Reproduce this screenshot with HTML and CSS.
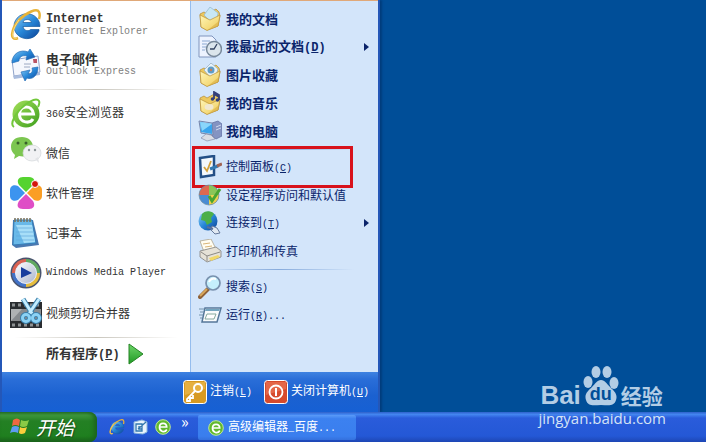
FILE: index.html
```
<!DOCTYPE html>
<html lang="zh-CN">
<head>
    <meta charset="UTF-8">
    <meta name="viewport" content="width=device-width, initial-scale=1.0">
    <title>开始菜单</title>
    <link rel="stylesheet" href="styles.css">
</head>
<body>

    <!-- Gradients and symbols shared by the icons -->
    <svg class="defs" aria-hidden="true">
        <defs>
            <linearGradient id="blue" x1="0" y1="0" x2="1" y2="1">
                <stop offset="0" stop-color="#8fd0f8"/><stop offset=".5" stop-color="#2787d8"/><stop offset="1" stop-color="#0b3f94"/>
            </linearGradient>
            <linearGradient id="green" x1="0" y1="0" x2="1" y2="1">
                <stop offset="0" stop-color="#a5e05a"/><stop offset="1" stop-color="#3c9e1c"/>
            </linearGradient>
            <linearGradient id="arrow" x1="0" y1="0" x2="0" y2="1">
                <stop offset="0" stop-color="#6fd56a"/><stop offset="1" stop-color="#1f9a24"/>
            </linearGradient>
            <linearGradient id="folder" x1="0" y1="0" x2="1" y2="1">
                <stop offset="0" stop-color="#fff6b8"/><stop offset="1" stop-color="#efcb58"/>
            </linearGradient>
            <linearGradient id="silver" x1="0" y1="0" x2="1" y2="1">
                <stop offset="0" stop-color="#ffffff"/><stop offset="1" stop-color="#a9b3cc"/>
            </linearGradient>
            <symbol id="ie" viewBox="0 0 32 32">
                <path d="M29 22A13 12.500 0 1 1 30 17.500H13C13.500 22 19 22.500 20.500 20.500H29ZM13 13.500H21.500C21 9.500 13.500 9.500 13 13.500Z" fill="url(#blue)" stroke="#175a9f" stroke-width=".7" fill-rule="evenodd"/>
                <path d="M8 29C-1 33 1 20 9 11C17 3 27-1 29 3C30 5 30 7 29 10" fill="none" stroke="#e8b338" stroke-width="2.500"/>
                <path d="M7 29C1 31 1 22 9 11" fill="none" stroke="#f8dc83" stroke-width="1"/>
            </symbol>
            <symbol id="e360" viewBox="0 0 32 32">
                <circle cx="16" cy="17" r="13.500" fill="url(#green)"/>
                <path d="M23 22C20 27 10 26 9.500 18C9 8 22 7 23.500 17H11" fill="none" stroke="#fff" stroke-width="3"/>
                <path d="M4 30C-1 27 6 15 15 8C21 3 27 1 29 4C30 6 29 8 28 10" fill="none" stroke="#72c83a" stroke-width="2"/>
            </symbol>
            <symbol id="ball" viewBox="0 0 16 16">
                <circle cx="8" cy="8" r="7.300" fill="#61b92d" stroke="#bfe89b"/>
                <path d="M11.800 10.500C10 14 4.500 13 4.500 8.300C4.500 3 11.500 3 11.700 8H5" fill="none" stroke="#fff" stroke-width="1.700"/>
            </symbol>
            <symbol id="open-folder" viewBox="0 0 24 24">
                <path d="M2 7L6 5L9 7L18 2L21 5L22 9L20 19L9 23L3 20Z" fill="#edc95e" stroke="#b58b35" stroke-width=".7"/>
            </symbol>
            <symbol id="folder-front" viewBox="0 0 24 24">
                <path d="M2 8L12 13L22 8L20 19L9 23.500L3 20Z" fill="url(#folder)" stroke="#b99039" stroke-width=".7"/>
                <path d="M9 23.500L20 19L21 14Z" fill="#d9ae42" opacity=".6"/>
            </symbol>
        </defs>
    </svg>

    <main class="desktop">
        <nav class="start-menu">
            <div class="columns">
                <div class="programs">
                    <a class="program" href="#">
                        <svg class="icon-lg"><use href="#ie"/></svg>
                        <span class="label"><b class="en">Internet</b><small class="en">Internet Explorer</small></span>
                    </a>
                    <a class="program" href="#">
                        <svg class="icon-lg" viewBox="0 0 32 32">
                            <path d="M2 11L28 7L30 23L4 27Z" fill="#f5f7fd" stroke="#8fa3ca"/>
                            <path d="M3 27L4 30L30 26V23" fill="#a9bcdd"/>
                            <path d="M23 10H27V14H23.500Z" fill="#b95465"/>
                            <path d="M14 15H21M14 18H20" stroke="#9ca8c2"/>
                            <path d="M2 14C2 4 11 0 18 3L20 0L25 8L16 11L17 7C12 6 9 8 9 12Z" fill="url(#blue)" stroke="#266fb8" stroke-width=".7"/>
                            <path d="M28 18C28 27 22 31 17 29L15 32L11 23L20 21L18 25C22 25 23 22 22 19Z" fill="url(#blue)" stroke="#266fb8" stroke-width=".7"/>
                        </svg>
                        <span class="label"><b>电子邮件</b><small class="en">Outlook Express</small></span>
                    </a>
                    <hr class="divider">
                    <a class="program" href="#">
                        <svg class="icon-lg"><use href="#e360"/></svg>
                        <span><span class="en">360</span>安全浏览器</span>
                    </a>
                    <a class="program" href="#">
                        <svg class="icon-lg" viewBox="0 0 32 32">
                            <path d="M12 0C5 0 1 4 1 10C1 14 3 16 5 18L4 22L9 19C18 21 23 16 23 10C23 4 18 0 12 0Z" fill="#7cc650"/>
                            <ellipse cx="22" cy="16" rx="9" ry="8" fill="#f1f2f4" stroke="#d3d7da" stroke-width=".7"/>
                            <path d="M25 22L29 26L28 20Z" fill="#e2e4e7"/>
                            <g fill="#37602a"><circle cx="8" cy="6" r="1.500"/><circle cx="16" cy="6" r="1.500"/></g>
                            <g fill="#8d9699"><circle cx="19" cy="13" r="1.200"/><circle cx="25" cy="13" r="1.200"/></g>
                        </svg>
                        <span>微信</span>
                    </a>
                    <a class="program" href="#">
                        <svg class="icon-lg" viewBox="0 0 32 32">
                            <path d="M16 15L9 8C6 3 9 0 13 0H19C24 0 26 4 23 8Z" fill="#55d32f"/>
                            <path d="M15 16L8 9C4 7 0 9 0 13V19C0 23 4 25 8 23Z" fill="#3c94ef"/>
                            <path d="M17 16L24 9C28 7 32 9 32 13V19C32 23 28 25 24 23Z" fill="#fb9e24"/>
                            <path d="M16 17L23 24C26 29 23 32 19 32H13C8 32 6 29 9 24Z" fill="#df4ec6"/>
                            <circle cx="25" cy="7" r="3.500" fill="#d3160d" stroke="#fff"/>
                        </svg>
                        <span>软件管理</span>
                    </a>
                    <a class="program" href="#">
                        <svg class="icon-lg" viewBox="0 0 32 32">
                            <path d="M3 3H23L29 28L6 31L2 28Z" fill="#4a78b0"/>
                            <path d="M4 3H22L26 26L3 28Z" fill="#69b9e9" stroke="#357eb8"/>
                            <path d="M6 8H22L25 25L14 26Z" fill="#a7def8"/>
                            <path d="M6 11H22M6 15H23M6 19H24M6 23H24" stroke="#62a9dc" stroke-width=".7"/>
                            <path d="M5 1V5M8 1V5M11 1V5M14 1V5M17 1V5M20 1V5" stroke="#77705b" stroke-width="1.500"/>
                        </svg>
                        <span>记事本</span>
                    </a>
                    <a class="program" href="#">
                        <svg class="icon-lg" viewBox="0 0 32 32">
                            <circle cx="16" cy="16" r="15.500" fill="#49536e"/>
                            <path d="M16 16V2A14 14 0 0 0 2 16Z" fill="#d96252"/>
                            <path d="M16 16V2A14 14 0 0 1 30 16Z" fill="#61a962"/>
                            <path d="M16 16H30A14 14 0 0 1 16 30Z" fill="#e6bd3d"/>
                            <path d="M16 16H2A14 14 0 0 0 16 30Z" fill="#4272c7"/>
                            <circle cx="16" cy="16" r="10.500" fill="url(#silver)" stroke="#e8edfa"/>
                            <path d="M11 10L22 16L11 21Z" fill="#183d9d"/>
                        </svg>
                        <span class="en">Windows Media Player</span>
                    </a>
                    <a class="program" href="#">
                        <svg class="icon-lg" viewBox="0 0 32 32">
                            <path d="M0 5H32V31H0Z" fill="#292c30"/>
                            <path d="M1 12H31V24H1Z" fill="#878b8f"/>
                            <path d="M1 24L12 12H1Z" fill="#afb2b4"/>
                            <path d="M2 8H31M2 28H31" stroke="#8d9193" stroke-width="3" stroke-dasharray="3 3"/>
                            <path d="M13 2L23 18M29 2L18 18" stroke="#397eaa" stroke-width="5"/>
                            <path d="M13 2L23 18M29 2L18 18" stroke="#c3edff" stroke-width="3"/>
                            <g fill="none" stroke="#397eaa" stroke-width="5"><circle cx="16" cy="21" r="3.500"/><circle cx="26" cy="21" r="3.500"/></g>
                            <g fill="none" stroke="#8bd2f5" stroke-width="3"><circle cx="16" cy="21" r="3.500"/><circle cx="26" cy="21" r="3.500"/></g>
                        </svg>
                        <span>视频剪切合并器</span>
                    </a>
                    <hr class="divider">
                    <a class="all-programs" href="#">
                        <span>所有程序<span class="en">(<u>P</u>)</span></span>
                        <svg class="all-arrow" viewBox="0 0 16 22"><path d="M1 1L15 11L1 21Z" fill="url(#arrow)" stroke="#258424" stroke-linejoin="round"/></svg>
                    </a>
                </div>

                <div class="places">
                    <a class="place strong" href="#">
                        <svg class="icon-md" viewBox="0 0 24 24"><use href="#open-folder"/><path d="M6 8L12 0L20 6L19 12L12 14Z" fill="#c8e7f5" stroke="#91b6cd" stroke-width=".7"/><use href="#folder-front"/></svg>
                        <span>我的文档</span>
                    </a>
                    <a class="place strong" href="#">
                        <svg class="icon-md" viewBox="0 0 24 24"><path d="M1 1H14L18 5V22H1Z" fill="#edf3ff" stroke="#8095bd"/><path d="M4 6H12M4 9H9M4 12H8M4 15H7" stroke="#8ba9d2"/><circle cx="16" cy="14" r="7.500" fill="#dbe5ec" stroke="#77889a" stroke-width="1.500"/><path d="M19 9L16 14H12" fill="none" stroke="#354461" stroke-width="1.300"/></svg>
                        <span>我最近的文档<span class="en">(<u>D</u>)</span></span>
                        <span class="submenu-arrow"></span>
                    </a>
                    <a class="place strong" href="#">
                        <svg class="icon-md" viewBox="0 0 24 24"><use href="#open-folder"/><path d="M6 7L13 0L20 6L18 12L12 14Z" fill="#e8f4fc" stroke="#91a9bd" stroke-width=".7"/><circle cx="13" cy="7" r="3.500" fill="#5e9dc9"/><circle cx="13" cy="7" r="1.200" fill="#c97d57"/><use href="#folder-front"/></svg>
                        <span>图片收藏</span>
                    </a>
                    <a class="place strong" href="#">
                        <svg class="icon-md" viewBox="0 0 24 24"><use href="#open-folder"/><use href="#folder-front"/><ellipse cx="11" cy="16" rx="4.500" ry="3" fill="#f1e8d0"/><path d="M16 8V1L21 4V9M16 3L21 6" fill="none" stroke="#333f79" stroke-width="1.800"/><circle cx="14.500" cy="8" r="1.800" fill="#333f79"/><circle cx="19.500" cy="9" r="1.800" fill="#333f79"/></svg>
                        <span>我的音乐</span>
                    </a>
                    <a class="place strong" href="#">
                        <svg class="icon-md" viewBox="0 0 24 24"><path d="M14 4L20 2L24 5V17L18 20L14 17Z" fill="#8494c2" stroke="#5d6b9d" stroke-width=".7"/><path d="M18 8L23 6M18 11L23 9" stroke="#d1daef"/><path d="M1 2L14 4L15 16L3 14Z" fill="#d2d9e7" stroke="#7284ac"/><path d="M2 3L14 5L14 15L3 13Z" fill="#39a5ed"/><path d="M2 3L14 5L4 12Z" fill="#89d6fb"/><path d="M8 15L13 16L17 20L9 22L3 19Z" fill="#dadde4" stroke="#858eaa" stroke-width=".7"/></svg>
                        <span>我的电脑</span>
                    </a>
                    <hr class="divider">
                    <a class="place highlighted" href="#">
                        <svg class="icon-md" viewBox="0 0 24 24"><path d="M2 3L16 1V20L3 22Z" fill="#f4f8fc" stroke="#244f86" stroke-width="2.500"/><path d="M6 12L9 16L13 6" fill="none" stroke="#d4a13b" stroke-width="1.800"/><path d="M12 14L20 11" stroke="#3279b1" stroke-width="3"/><path d="M19 11L24 9" stroke="#a16554" stroke-width="3"/></svg>
                        <span>控制面板<span class="en">(<u>C</u>)</span></span>
                    </a>
                    <a class="place" href="#">
                        <svg class="icon-md" viewBox="0 0 24 24"><circle cx="11" cy="12" r="10" fill="#4b8cd2"/><path d="M11 12V2A10 10 0 0 0 1 12Z" fill="#df6950"/><path d="M11 12V2A10 10 0 0 1 21 12Z" fill="#8ac559"/><path d="M11 12H21A10 10 0 0 1 11 22Z" fill="#efd04d"/><circle cx="11" cy="12" r="10" fill="none" stroke="#6f8c9f" stroke-width=".7"/><path d="M11 13L14 18L22 6" fill="none" stroke="#49a432" stroke-width="3"/></svg>
                        <span>设定程序访问和默认值</span>
                    </a>
                    <a class="place" href="#">
                        <svg class="icon-md" viewBox="0 0 24 24"><circle cx="10" cy="10" r="9.500" fill="url(#blue)"/><path d="M4 3C8-1 14 0 16 3L13 7L14 11L9 14L7 10L3 9Z" fill="#4caf49"/><path d="M14 15L19 17L22 22L17 23L13 19Z" fill="#e0e8f2" stroke="#65799b"/><path d="M9 16L15 18" stroke="#59709b" stroke-width="2"/></svg>
                        <span>连接到<span class="en">(<u>T</u>)</span></span>
                        <span class="submenu-arrow"></span>
                    </a>
                    <a class="place" href="#">
                        <svg class="icon-md" viewBox="0 0 24 24"><path d="M2 2L13 0L18 10L6 13Z" fill="#fffdf2" stroke="#a69b80" stroke-width=".7"/><path d="M5 5L12 4M7 8L14 7" stroke="#d9b578"/><path d="M2 12L18 8L23 12V18L9 23L2 18Z" fill="#e6e2d7" stroke="#807f7b" stroke-width=".8"/><path d="M3 13L9 17L22 13M9 17V22" fill="none" stroke="#8c8a85"/><path d="M11 19L20 16L22 18L13 22Z" fill="#f1d867"/></svg>
                        <span>打印机和传真</span>
                    </a>
                    <hr class="divider">
                    <a class="place" href="#">
                        <svg class="icon-md" viewBox="0 0 24 24"><path d="M2 22L10 14" stroke="#8d6038" stroke-width="4" stroke-linecap="round"/><path d="M2 21L9 14" stroke="#d9a75b" stroke-width="2"/><circle cx="15" cy="8" r="7" fill="#c5effc" stroke="#7890ad" stroke-width="1.700"/><path d="M11 7C12 4 15 3 18 4" fill="none" stroke="#fff" stroke-width="2"/></svg>
                        <span>搜索<span class="en">(<u>S</u>)</span></span>
                    </a>
                    <a class="place" href="#">
                        <svg class="icon-md" viewBox="0 0 24 24"><path d="M7 5H23L19 19H4Z" fill="#f8fbfc" stroke="#557799" stroke-width="1.500"/><path d="M8 6H22L21 8H7Z" fill="#73a5bf"/><path d="M9 11H18L16 16H7Z" fill="#fff" stroke="#86a99e"/><path d="M1 6H6M2 9H6M1 12H5M2 15H4" stroke="#7293ac"/></svg>
                        <span>运行<span class="en">(<u>R</u>)...</span></span>
                    </a>
                </div>
            </div>

            <div class="session">
                <button class="session-button" type="button">
                    <svg class="icon-md" viewBox="0 0 24 24"><rect x=".5" y=".5" width="23" height="23" rx="3" fill="#d79a22" stroke="#fff"/><path d="M2 2H22V9L2 15Z" fill="#ecb94e" opacity=".7"/><circle cx="15" cy="8" r="4" fill="none" stroke="#fff" stroke-width="2"/><path d="M12 11L4 19V21H7V18H10V15" fill="none" stroke="#fff" stroke-width="1.800"/></svg>
                    <span>注销<span class="en">(<u>L</u>)</span></span>
                </button>
                <button class="session-button" type="button">
                    <svg class="icon-md" viewBox="0 0 24 24"><rect x=".5" y=".5" width="23" height="23" rx="3" fill="#d64a2c" stroke="#fff"/><path d="M2 2H22V9L2 15Z" fill="#ed7c5c" opacity=".6"/><circle cx="12" cy="12" r="6.500" fill="none" stroke="#fff" stroke-width="1.800"/><path d="M12 8V16" stroke="#fff" stroke-width="2"/></svg>
                    <span>关闭计算机<span class="en">(<u>U</u>)</span></span>
                </button>
            </div>
        </nav>
    </main>

    <footer class="taskbar">
        <button class="start-button" type="button">
            <svg class="flag" viewBox="0 0 20 20">
                <path d="M3 3Q7 0 10 3L9 9Q5 7 2 9Z" fill="#ef6842"/>
                <path d="M11 3Q15 5 19 3L17 9Q13 11 10 9Z" fill="#8acb46"/>
                <path d="M2 10Q5 8 9 10L8 16Q4 14 0 16Z" fill="#5d9cf2"/>
                <path d="M10 10Q13 12 17 10L15 16Q11 18 9 16Z" fill="#f9ce3c"/>
            </svg>
            <span>开始</span>
        </button>
        <div class="quick-launch">
            <a href="#" aria-label="Internet Explorer"><svg class="icon-sm"><use href="#ie"/></svg></a>
            <a href="#" aria-label="显示桌面"><svg class="icon-sm" viewBox="0 0 16 16"><path d="M2 3L10 1L15 3V13L11 15L2 14Z" fill="#e9f4fc" stroke="#8cb7dc"/><path d="M4 5H10V12H4ZM6 10L14 3M7 7V10H10" fill="none" stroke="#3277ae" stroke-width="1.300"/></svg></a>
            <a href="#" aria-label="360安全浏览器"><svg class="icon-sm"><use href="#ball"/></svg></a>
            <button class="more" type="button">»</button>
        </div>
        <button class="task" type="button">
            <svg class="icon-sm"><use href="#ball"/></svg>
            <span>高级编辑器<span class="en">_</span>百度<span class="en">...</span></span>
        </button>
    </footer>

    <div class="watermark">
        <div class="brand">
            <span class="brand-name">Bai</span>
            <span class="paw">
                <svg viewBox="0 0 36 40"><g fill="currentColor"><ellipse cx="5" cy="16" rx="4.500" ry="6"/><ellipse cx="13" cy="6" rx="4.500" ry="6"/><ellipse cx="24" cy="6" rx="4.500" ry="6"/><ellipse cx="31" cy="17" rx="4.500" ry="6"/><path d="M18 14C22 14 24 18 27 21C31 25 35 28 33 34C31 41 25 39 18 39C11 39 5 41 3 34C1 28 5 25 9 21C12 18 14 14 18 14Z"/></g></svg>
                <span class="paw-text">du</span>
            </span>
            <span class="brand-cn">经验</span>
        </div>
        <div class="site">jingyan.baidu.com</div>
    </div>

</body>
</html>
```
FILE: styles.css
```
* {
    box-sizing: border-box;
}

body {
    margin: 0;
    min-height: 100vh;
    display: flex;
    flex-direction: column;
    position: relative;
    background-color: #004e98;
    font-family: "Noto Sans CJK SC", sans-serif;
    font-size: 12px;
    line-height: 16px;
}

a {
    color: inherit;
    text-decoration: none;
}

button {
    border: 0;
    padding: 0;
    background: none;
    color: inherit;
    font: inherit;
    cursor: pointer;
}

svg {
    display: block;
    flex: none;
}

.defs {
    position: absolute;
    width: 0;
    height: 0;
}

.en {
    font-family: "Liberation Mono", monospace;
    font-size: 10px;
}

.icon-lg {
    width: 32px;
    height: 32px;
}

.icon-md {
    width: 24px;
    height: 24px;
}

.icon-sm {
    width: 16px;
    height: 16px;
}

/* Start menu */
.desktop {
    flex: 1;
    display: flex;
    align-items: flex-end;
}

.start-menu {
    width: 380px;
    border: solid #2457b8;
    border-width: 0 2px;
    background-color: #2364cf;
    box-shadow: 2px 0 2px #003c7c;
}

.columns {
    display: grid;
    grid-template-columns: 1fr 1fr;
    border-top: 1px solid #e0a878;
}

.programs {
    padding: 4px 0 0;
    background-color: #fff;
    color: #333;
}

.program {
    display: flex;
    align-items: center;
    gap: 4px;
    height: 40px;
    padding-left: 8px;
}

.label {
    display: flex;
    flex-direction: column;
}

.label b {
    font-size: 13px;
    line-height: 14px;
}

.label b.en {
    font-size: 12px;
}

.label small {
    color: #808080;
    line-height: 12px;
}

.divider {
    height: 1px;
    margin: 4px 12px 3px;
    border: 0;
    background: linear-gradient(to right, transparent, #c9c6bd, transparent);
}

.all-programs {
    display: flex;
    align-items: center;
    gap: 8px;
    height: 26px;
    padding-left: 44px;
    font-size: 13px;
    font-weight: bold;
}

.all-arrow {
    width: 16px;
    height: 22px;
}

.places {
    padding: 4px 0 0;
    border-left: 1px solid #95bdee;
    background-color: #d3e5fa;
    color: #0a246a;
}

.place {
    display: flex;
    align-items: center;
    gap: 4px;
    height: 28px;
    padding: 0 9px 0 7px;
    position: relative;
}

.strong {
    font-size: 13px;
    font-weight: bold;
}

.strong .en,
.all-programs .en {
    font-size: 12px;
}

.places .divider {
    margin-right: 24px;
    background: linear-gradient(to right, transparent, #87abdc, transparent);
}

.submenu-arrow {
    margin-left: auto;
    border: solid transparent;
    border-width: 4px 0 4px 5px;
    border-left-color: #0a246a;
}

.highlighted::after {
    content: "";
    position: absolute;
    top: -7px;
    bottom: -7px;
    left: 1px;
    right: 25px;
    border: 3px solid #d8121b;
}

.session {
    display: flex;
    justify-content: flex-end;
    align-items: center;
    gap: 12px;
    min-height: 41px;
    margin-top: -1px;
    padding-right: 9px;
    background: linear-gradient(#4185e2, #2a6ed8 20%, #1b61d0 60%, #1660d4);
    color: #fff;
}

.columns {
    min-height: 372px;
}

.session-button {
    display: flex;
    align-items: center;
    gap: 3px;
}

/* Taskbar */
.taskbar {
    display: flex;
    height: 30px;
    background: linear-gradient(#2e61ca, #4386f0 8%, #2a5cdb 20%, #2458d6 80%, #1d46b4);
    color: #fff;
}

.start-button {
    display: flex;
    align-items: center;
    gap: 6px;
    width: 97px;
    padding-left: 10px;
    border-radius: 0 8px 8px 0;
    background: linear-gradient(#2d772d, #3f983e 10%, #248024 30%, #1f7f1f 80%, #1a621b);
    box-shadow: inset -3px 0 4px #1c641d;
    font-size: 19px;
    font-style: italic;
    line-height: 28px;
    text-shadow: 1px 1px 1px #1b4d1b;
}

.flag {
    width: 20px;
    height: 20px;
}

.quick-launch {
    display: flex;
    align-items: center;
    gap: 7px;
    width: 101px;
    padding-left: 12px;
}

.more {
    align-self: flex-start;
    margin-left: 3px;
    font-size: 16px;
    line-height: 18px;
}

.task {
    display: flex;
    align-items: center;
    gap: 4px;
    width: 158px;
    margin: 3px 0 2px;
    padding-left: 10px;
    border-radius: 2px;
    background: linear-gradient(#5a9bf8, #3c81f0 15%, #3a7eee 85%, #3470dd);
}

/* Site mark over the corner of the desktop */
.watermark {
    position: absolute;
    right: 40px;
    bottom: 14px;
}

.brand {
    display: flex;
    align-items: flex-end;
    padding: 0 1px 2px 2px;
    color: #b3cde5;
}

.brand-name {
    font-family: "Liberation Sans", sans-serif;
    font-size: 26px;
    font-weight: bold;
    line-height: 22px;
}

.paw {
    position: relative;
    width: 36px;
    height: 40px;
    margin-left: 2px;
}

.paw-text {
    position: absolute;
    left: 0;
    right: 0;
    bottom: 4px;
    color: #004e98;
    font-family: "Liberation Sans", sans-serif;
    font-size: 18px;
    font-weight: bold;
    line-height: 16px;
    text-align: center;
}

.brand-cn {
    margin-left: 2px;
    font-size: 21px;
    font-weight: bold;
    line-height: 22px;
}

.site {
    color: #d5e3f5;
    font-family: "Open Sans", sans-serif;
    font-size: 15px;
    line-height: 20px;
}
```
